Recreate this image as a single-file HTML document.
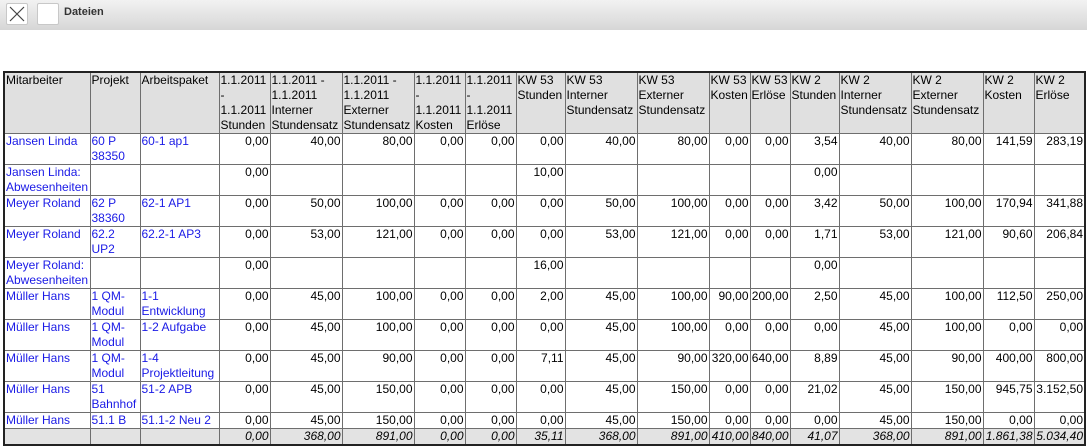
<!DOCTYPE html>
<html><head><meta charset="utf-8"><style>
body{margin:0;width:1087px;height:445px;overflow:hidden;background:#fff;font-family:"Liberation Sans",sans-serif;}
.bar{position:absolute;left:0;top:0;width:1087px;height:30px;background:linear-gradient(#f2f2f2,#d6d6d6);}
.btn{position:absolute;top:3px;width:20px;height:20px;background:#fff;border:1px solid #c8c8c8;border-radius:2px;}
.lbl{position:absolute;left:64px;top:6px;font-size:11px;font-weight:bold;color:#333;}
table{position:absolute;left:3px;top:71px;border-collapse:collapse;table-layout:fixed;font-size:12px;line-height:15px;border:2px solid #222;}
td,th{border:1px solid #6e6e6e;padding:0 1px;vertical-align:top;overflow:hidden;white-space:nowrap;}
th{background:#e0e0e0;font-weight:normal;text-align:left;white-space:normal;word-break:normal;}
td{text-align:right;height:30px;}
td.l{text-align:left;color:#1a1ae6;white-space:normal;}
tr.s td{height:15px;}
tr.t td{height:15px;background:#e3e3e3;font-style:italic;}
</style></head><body>
<div class="bar">
<div class="btn" style="left:6px"><svg width="20" height="20"><path d="M3 3L17 17M17 3L3 17" stroke="#444" stroke-width="1.2"/></svg></div>
<div class="btn" style="left:37px"></div>
<div class="lbl">Dateien</div>
</div>
<table>
<colgroup><col style="width:86px"><col style="width:50px"><col style="width:79px"><col style="width:51px"><col style="width:72px"><col style="width:72px"><col style="width:51px"><col style="width:51px"><col style="width:49px"><col style="width:72px"><col style="width:72px"><col style="width:41px"><col style="width:40px"><col style="width:49px"><col style="width:72px"><col style="width:72px"><col style="width:51px"><col style="width:51px"></colgroup>
<tr style="height:61px"><th>Mitarbeiter</th><th>Projekt</th><th>Arbeitspaket</th><th>1.1.2011 - 1.1.2011 Stunden</th><th>1.1.2011 - 1.1.2011 Interner Stundensatz</th><th>1.1.2011 - 1.1.2011 Externer Stundensatz</th><th>1.1.2011 - 1.1.2011 Kosten</th><th>1.1.2011 - 1.1.2011 Erlöse</th><th>KW 53 Stunden</th><th>KW 53 Interner Stundensatz</th><th>KW 53 Externer Stundensatz</th><th>KW 53 Kosten</th><th>KW 53 Erlöse</th><th>KW 2 Stunden</th><th>KW 2 Interner Stundensatz</th><th>KW 2 Externer Stundensatz</th><th>KW 2 Kosten</th><th>KW 2 Erlöse</th></tr>
<tr><td class="l">Jansen Linda</td><td class="l">60 P 38350</td><td class="l">60-1 ap1</td><td>0,00</td><td>40,00</td><td>80,00</td><td>0,00</td><td>0,00</td><td>0,00</td><td>40,00</td><td>80,00</td><td>0,00</td><td>0,00</td><td>3,54</td><td>40,00</td><td>80,00</td><td>141,59</td><td>283,19</td></tr>
<tr><td class="l">Jansen Linda: Abwesenheiten</td><td class="l"></td><td class="l"></td><td>0,00</td><td></td><td></td><td></td><td></td><td>10,00</td><td></td><td></td><td></td><td></td><td>0,00</td><td></td><td></td><td></td><td></td></tr>
<tr><td class="l">Meyer Roland</td><td class="l">62 P 38360</td><td class="l">62-1 AP1</td><td>0,00</td><td>50,00</td><td>100,00</td><td>0,00</td><td>0,00</td><td>0,00</td><td>50,00</td><td>100,00</td><td>0,00</td><td>0,00</td><td>3,42</td><td>50,00</td><td>100,00</td><td>170,94</td><td>341,88</td></tr>
<tr><td class="l">Meyer Roland</td><td class="l">62.2 UP2</td><td class="l">62.2-1 AP3</td><td>0,00</td><td>53,00</td><td>121,00</td><td>0,00</td><td>0,00</td><td>0,00</td><td>53,00</td><td>121,00</td><td>0,00</td><td>0,00</td><td>1,71</td><td>53,00</td><td>121,00</td><td>90,60</td><td>206,84</td></tr>
<tr><td class="l">Meyer Roland: Abwesenheiten</td><td class="l"></td><td class="l"></td><td>0,00</td><td></td><td></td><td></td><td></td><td>16,00</td><td></td><td></td><td></td><td></td><td>0,00</td><td></td><td></td><td></td><td></td></tr>
<tr><td class="l">Müller Hans</td><td class="l">1 QM-Modul</td><td class="l">1-1 Entwicklung</td><td>0,00</td><td>45,00</td><td>100,00</td><td>0,00</td><td>0,00</td><td>2,00</td><td>45,00</td><td>100,00</td><td>90,00</td><td>200,00</td><td>2,50</td><td>45,00</td><td>100,00</td><td>112,50</td><td>250,00</td></tr>
<tr><td class="l">Müller Hans</td><td class="l">1 QM-Modul</td><td class="l">1-2 Aufgabe</td><td>0,00</td><td>45,00</td><td>100,00</td><td>0,00</td><td>0,00</td><td>0,00</td><td>45,00</td><td>100,00</td><td>0,00</td><td>0,00</td><td>0,00</td><td>45,00</td><td>100,00</td><td>0,00</td><td>0,00</td></tr>
<tr><td class="l">Müller Hans</td><td class="l">1 QM-Modul</td><td class="l">1-4 Projektleitung</td><td>0,00</td><td>45,00</td><td>90,00</td><td>0,00</td><td>0,00</td><td>7,11</td><td>45,00</td><td>90,00</td><td>320,00</td><td>640,00</td><td>8,89</td><td>45,00</td><td>90,00</td><td>400,00</td><td>800,00</td></tr>
<tr><td class="l">Müller Hans</td><td class="l">51 Bahnhof</td><td class="l">51-2 APB</td><td>0,00</td><td>45,00</td><td>150,00</td><td>0,00</td><td>0,00</td><td>0,00</td><td>45,00</td><td>150,00</td><td>0,00</td><td>0,00</td><td>21,02</td><td>45,00</td><td>150,00</td><td>945,75</td><td>3.152,50</td></tr>
<tr class="s"><td class="l">Müller Hans</td><td class="l">51.1 B</td><td class="l">51.1-2 Neu 2</td><td>0,00</td><td>45,00</td><td>150,00</td><td>0,00</td><td>0,00</td><td>0,00</td><td>45,00</td><td>150,00</td><td>0,00</td><td>0,00</td><td>0,00</td><td>45,00</td><td>150,00</td><td>0,00</td><td>0,00</td></tr>
<tr class="t"><td></td><td></td><td></td><td>0,00</td><td>368,00</td><td>891,00</td><td>0,00</td><td>0,00</td><td>35,11</td><td>368,00</td><td>891,00</td><td>410,00</td><td>840,00</td><td>41,07</td><td>368,00</td><td>891,00</td><td>1.861,38</td><td>5.034,40</td></tr>
</table>
</body></html>
